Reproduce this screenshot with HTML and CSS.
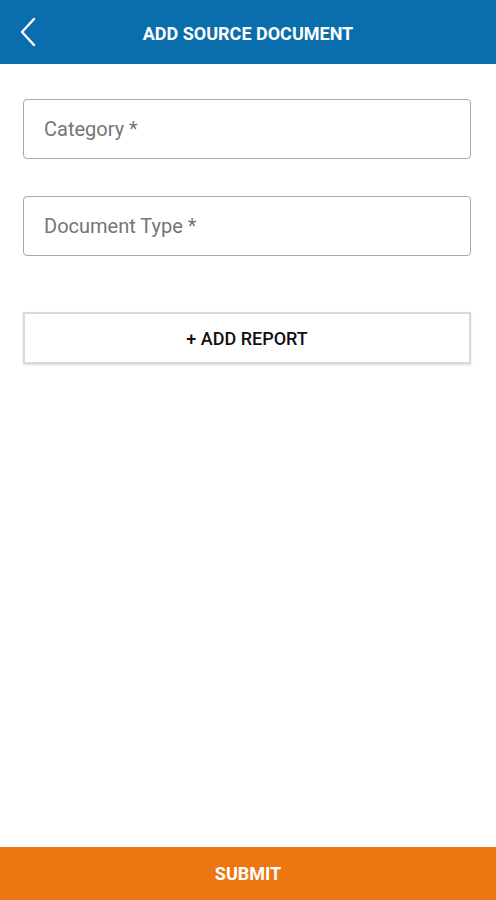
FILE: index.html
```html
<!DOCTYPE html>
<html lang="en">
<head>
    <meta charset="UTF-8">
    <meta name="viewport" content="width=device-width, initial-scale=1.0">
    <title>Add Source Document</title>
    <link rel="stylesheet" href="styles.css">
</head>
<body>
    <div id="app">
        <header class="top-bar">
            <button class="back-btn" aria-label="Back">
                <svg width="18" height="30" viewBox="0 0 18 30">
                    <path d="M15 2 L3 15 L15 28" fill="none" stroke="#fff" stroke-width="2.4" stroke-linecap="round" stroke-linejoin="round"/>
                </svg>
            </button>
            <h1 class="title">ADD SOURCE DOCUMENT</h1>
        </header>

        <main class="form-area">
            <div class="field">
                <span class="placeholder">Category *</span>
            </div>
            <div class="field">
                <span class="placeholder">Document Type *</span>
            </div>
            <button class="add-report-btn">+ ADD REPORT</button>
        </main>

        <button class="submit-btn">SUBMIT</button>
    </div>
</body>
</html>
```

FILE: styles.css
```css
html, body {
    margin: 0;
    padding: 0;
    height: 100%;
    background: #fff;
    font-family: Roboto, 'Noto Sans', sans-serif;
}

#app {
    display: flex;
    flex-direction: column;
    height: 100vh;
}

.top-bar {
    position: relative;
    height: 64px;
    background: #0a6dac;
    display: flex;
    align-items: center;
    justify-content: center;
    flex-shrink: 0;
}

.back-btn {
    position: absolute;
    left: 19px;
    top: 17px;
    padding: 0;
    border: none;
    background: none;
    display: flex;
}

.title {
    margin: 0 0 -2px;
    color: #fff;
    font-size: 18px;
    font-weight: 700;
}

.form-area {
    flex: 1;
    display: flex;
    flex-direction: column;
    padding: 35px 25px 0 23px;
}

.field {
    height: 58px;
    border: 1px solid #a9a9a9;
    border-radius: 4px;
    display: flex;
    align-items: center;
    padding-left: 20px;
    margin-bottom: 37px;
}

.placeholder {
    color: #757575;
    font-size: 20px;
}

.add-report-btn {
    margin-top: 19px;
    height: 52px;
    background: #fff;
    border: 2px solid #d9d9d9;
    box-shadow: 0 1px 2px rgba(0, 0, 0, 0.15);
    font-family: Roboto, sans-serif;
    font-size: 18px;
    font-weight: 500;
    color: #111;
}

.submit-btn {
    height: 53px;
    flex-shrink: 0;
    border: none;
    background: #ec7612;
    color: #fff;
    font-family: Roboto, sans-serif;
    font-size: 18px;
    font-weight: 700;
}
```
